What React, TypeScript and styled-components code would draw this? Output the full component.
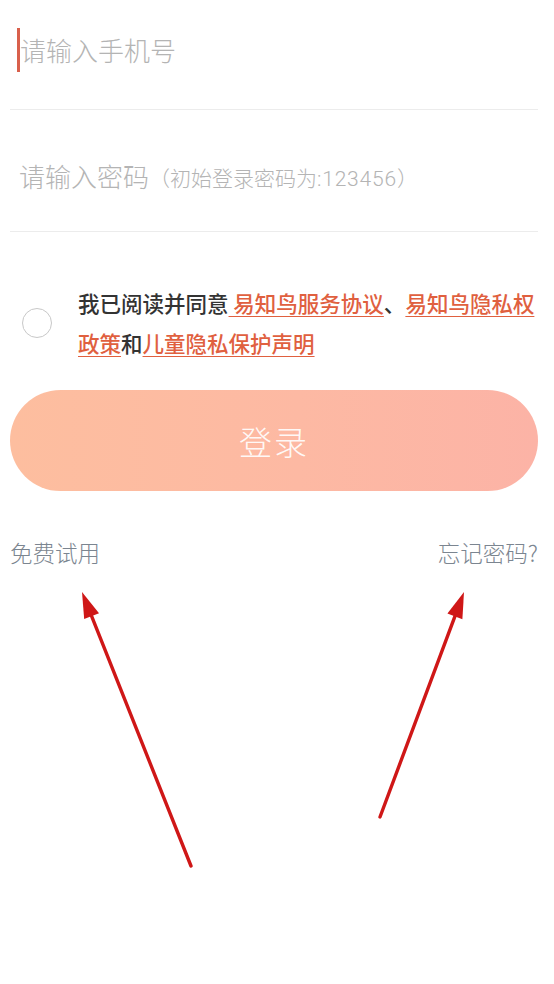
import React from "react";
import styled, { createGlobalStyle } from "styled-components";

const colors = {
  placeholder: "#b4b4b4",
  divider: "#ececec",
  text: "#333333",
  link: "#e0603f",
  caret: "#d9604c",
  muted: "#7b8590",
  arrow: "#cf1717",
};

const GlobalStyle = createGlobalStyle`
  html, body {
    margin: 0;
    padding: 0;
    background: #ffffff;
  }
  body {
    font-family: "Noto Sans CJK SC", "Noto Sans", sans-serif;
  }
`;

const Page = styled.div`
  position: relative;
  width: 554px;
  height: 984px;
  padding: 0 16px 0 10px;
  box-sizing: border-box;
  overflow: hidden;
`;

const Field = styled.div<{ $height: number; $top: number; $bottom: number }>`
  display: flex;
  align-items: center;
  height: ${(p) => p.$height}px;
  padding: ${(p) => p.$top}px 0 ${(p) => p.$bottom}px 9px;
  box-sizing: border-box;
  border-bottom: 1px solid ${colors.divider};
`;

const Caret = styled.span`
  width: 3px;
  height: 44px;
  margin-left: -2px;
  background: ${colors.caret};
`;

const Placeholder = styled.span`
  font-size: 26px;
  font-weight: 300;
  line-height: 36px;
  color: ${colors.placeholder};
`;

const Hint = styled.span`
  font-size: 21px;
  font-weight: 300;
  color: ${colors.placeholder};
  margin-top: 2px;
`;

const Digits = styled.span`
  font-family: Roboto, "Noto Sans", sans-serif;
  letter-spacing: 0.8px;
`;

const Agreement = styled.div`
  display: flex;
  align-items: center;
  margin-top: 51px;
  padding-left: 12px;
`;

const Radio = styled.span`
  flex: none;
  width: 30px;
  height: 30px;
  border-radius: 50%;
  border: 1px solid #c8c8c8;
  box-sizing: border-box;
`;

const AgreeText = styled.p`
  margin: 0 0 0 26px;
  width: 466px;
  font-size: 21.5px;
  line-height: 40px;
  font-weight: 500;
  color: ${colors.text};
`;

const Link = styled.a`
  color: ${colors.link};
  text-decoration: underline;
  text-underline-offset: 4px;
  text-decoration-thickness: 1px;
`;

const LoginButton = styled.button`
  display: block;
  width: 528px;
  height: 101px;
  margin-top: 27px;
  border: none;
  border-radius: 51px;
  background: linear-gradient(90deg, #fdbe9f 0%, #fdb9a3 55%, #fcb3a6 100%);
  color: rgba(255, 255, 255, 0.92);
  font-family: inherit;
  font-size: 33px;
  font-weight: 300;
  letter-spacing: 2px;
`;

const Footer = styled.div`
  display: flex;
  justify-content: space-between;
  margin-top: 46px;
`;

const FooterLink = styled.span`
  font-size: 22.5px;
  font-weight: 300;
  line-height: 30px;
  color: ${colors.muted};
`;

const Arrows = styled.svg`
  position: absolute;
  left: 0;
  top: 0;
  pointer-events: none;
`;

interface arrowProps {
  x1: number;
  y1: number;
  x2: number;
  y2: number;
}

// annotation arrow drawn over the page, head at (x2, y2)
const Arrow: React.FC<arrowProps> = ({ x1, y1, x2, y2 }) => {
  const angle = Math.atan2(y2 - y1, x2 - x1);
  const len = 26;
  const half = 8;
  const bx = x2 - len * Math.cos(angle);
  const by = y2 - len * Math.sin(angle);
  const px = -Math.sin(angle) * half;
  const py = Math.cos(angle) * half;
  return (
    <g>
      <line
        x1={x1}
        y1={y1}
        x2={bx}
        y2={by}
        stroke={colors.arrow}
        strokeWidth={3.4}
        strokeLinecap="round"
      />
      <polygon
        points={`${x2},${y2} ${bx + px},${by + py} ${bx - px},${by - py}`}
        fill={colors.arrow}
      />
    </g>
  );
};

const App: React.FC = (): JSX.Element => {
  return (
    <Page>
      <GlobalStyle />
      <Field $height={110} $top={0} $bottom={10}>
        <Caret />
        <Placeholder>请输入手机号</Placeholder>
      </Field>
      <Field $height={122} $top={10} $bottom={0}>
        <Placeholder>请输入密码</Placeholder>
        <Hint>
          （初始登录密码为<Digits>:123456</Digits>）
        </Hint>
      </Field>
      <Agreement>
        <Radio />
        <AgreeText>
          我已阅读并同意<Link> 易知鸟服务协议</Link>、<Link>易知鸟隐私权政策</Link>和
          <Link>儿童隐私保护声明</Link>
        </AgreeText>
      </Agreement>
      <LoginButton>登录</LoginButton>
      <Footer>
        <FooterLink>免费试用</FooterLink>
        <FooterLink>忘记密码?</FooterLink>
      </Footer>
      <Arrows width={554} height={984}>
        <Arrow x1={191} y1={866} x2={82} y2={592} />
        <Arrow x1={380} y1={817} x2={464} y2={592} />
      </Arrows>
    </Page>
  );
};

export default App;
